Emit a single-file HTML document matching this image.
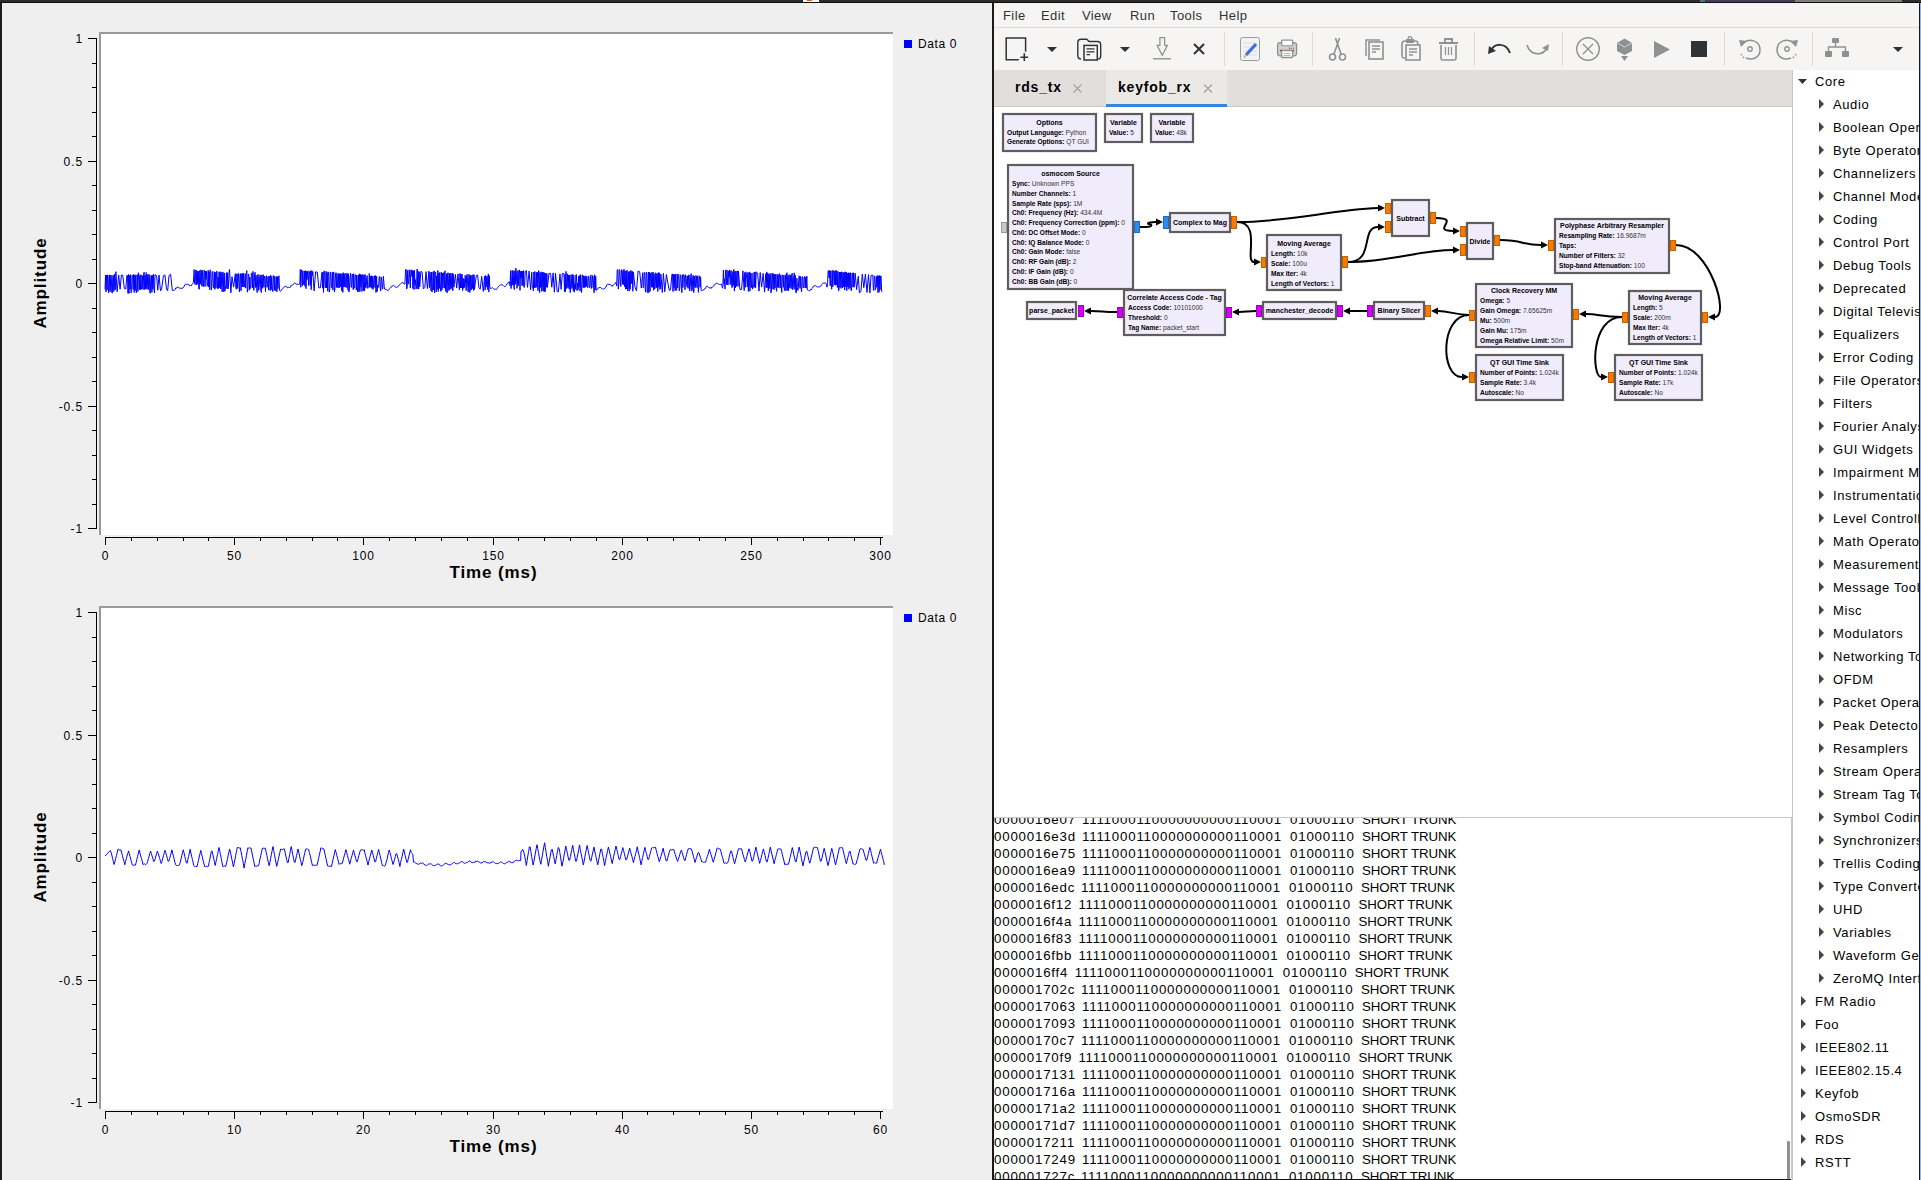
<!DOCTYPE html>
<html><head><meta charset="utf-8"><title>GRC</title><style>
html,body{margin:0;padding:0;width:1921px;height:1180px;overflow:hidden;background:#efefef;font-family:"Liberation Sans",sans-serif;position:relative}
.abs{position:absolute}
svg text{font-family:"Liberation Sans",sans-serif}
.tk{font-size:12px;letter-spacing:0.9px;fill:#000}
.ttl{font-size:17px;font-weight:bold;letter-spacing:0.9px;fill:#000}
.lg{font-size:12px;letter-spacing:0.6px;fill:#000}
.bt{font-size:7px;font-weight:bold;fill:#000}
.bk{font-size:6.6px;font-weight:bold;fill:#000}
.bv{font-weight:normal;fill:#333}
.tr{font-size:13px;letter-spacing:0.6px;fill:#000}
.menu span{position:absolute;top:8px;font-size:13px;letter-spacing:0.4px;color:#2e3436}
.cl{position:absolute;white-space:pre;font-size:13.3px;letter-spacing:0.8px;color:#000;line-height:15px}
.cu{letter-spacing:-0.1px}
.tab{position:absolute;top:79px;font-size:14px;font-weight:bold;letter-spacing:0.8px;color:#000}
</style></head><body>
<div class="abs" style="left:0;top:0;width:1921px;height:2px;background:#2d2d2d"></div>
<div class="abs" style="left:0;top:2px;width:1921px;height:1px;background:#0e0e0e"></div>
<div class="abs" style="left:1700px;top:0;width:5px;height:2px;background:#4c7a7c"></div>
<div class="abs" style="left:803px;top:0;width:16px;height:2px;background:#fff"></div>
<div class="abs" style="left:807px;top:0;width:5px;height:1px;background:#f05010"></div>
<div class="abs" style="left:1705px;top:0;width:90px;height:2px;background:#4a3a56"></div>
<div class="abs" style="left:1795px;top:0;width:107px;height:2px;background:#7a827a"></div>
<svg class="abs" style="left:0;top:0" width="992" height="1180"><rect x="0" y="3" width="992" height="1177" fill="#efefef"/><rect x="0" y="3" width="2" height="1177" fill="#1c1c1c"/><rect x="99" y="32" width="794" height="503" fill="#9a9a9a"/><rect x="101" y="34" width="792" height="501" fill="#ffffff"/><path d="M96.5 38.5V528.5" stroke="#000" stroke-width="1"/><path d="M88 38.5H97" stroke="#000" stroke-width="1"/><text x="83" y="43.0" text-anchor="end" class="tk">1</text><path d="M92 63.5H97" stroke="#000" stroke-width="1"/><path d="M92 87.5H97" stroke="#000" stroke-width="1"/><path d="M92 112.5H97" stroke="#000" stroke-width="1"/><path d="M92 136.5H97" stroke="#000" stroke-width="1"/><path d="M88 161.5H97" stroke="#000" stroke-width="1"/><text x="83" y="166.0" text-anchor="end" class="tk">0.5</text><path d="M92 185.5H97" stroke="#000" stroke-width="1"/><path d="M92 210.5H97" stroke="#000" stroke-width="1"/><path d="M92 234.5H97" stroke="#000" stroke-width="1"/><path d="M92 259.5H97" stroke="#000" stroke-width="1"/><path d="M88 283.5H97" stroke="#000" stroke-width="1"/><text x="83" y="288.0" text-anchor="end" class="tk">0</text><path d="M92 308.5H97" stroke="#000" stroke-width="1"/><path d="M92 332.5H97" stroke="#000" stroke-width="1"/><path d="M92 357.5H97" stroke="#000" stroke-width="1"/><path d="M92 381.5H97" stroke="#000" stroke-width="1"/><path d="M88 406.5H97" stroke="#000" stroke-width="1"/><text x="83" y="411.0" text-anchor="end" class="tk">-0.5</text><path d="M92 430.5H97" stroke="#000" stroke-width="1"/><path d="M92 455.5H97" stroke="#000" stroke-width="1"/><path d="M92 479.5H97" stroke="#000" stroke-width="1"/><path d="M92 504.5H97" stroke="#000" stroke-width="1"/><path d="M88 528.5H97" stroke="#000" stroke-width="1"/><text x="83" y="533.0" text-anchor="end" class="tk">-1</text><path d="M105 537.5H883" stroke="#000" stroke-width="1"/><path d="M105.5 537.0V545.0" stroke="#000" stroke-width="1"/><text x="105.5" y="560" text-anchor="middle" class="tk">0</text><path d="M131.5 537.0V541.0" stroke="#000" stroke-width="1"/><path d="M157.5 537.0V541.0" stroke="#000" stroke-width="1"/><path d="M183.5 537.0V541.0" stroke="#000" stroke-width="1"/><path d="M208.5 537.0V541.0" stroke="#000" stroke-width="1"/><path d="M234.5 537.0V545.0" stroke="#000" stroke-width="1"/><text x="234.5" y="560" text-anchor="middle" class="tk">50</text><path d="M260.5 537.0V541.0" stroke="#000" stroke-width="1"/><path d="M286.5 537.0V541.0" stroke="#000" stroke-width="1"/><path d="M312.5 537.0V541.0" stroke="#000" stroke-width="1"/><path d="M337.5 537.0V541.0" stroke="#000" stroke-width="1"/><path d="M363.5 537.0V545.0" stroke="#000" stroke-width="1"/><text x="363.5" y="560" text-anchor="middle" class="tk">100</text><path d="M389.5 537.0V541.0" stroke="#000" stroke-width="1"/><path d="M415.5 537.0V541.0" stroke="#000" stroke-width="1"/><path d="M441.5 537.0V541.0" stroke="#000" stroke-width="1"/><path d="M467.5 537.0V541.0" stroke="#000" stroke-width="1"/><path d="M493.5 537.0V545.0" stroke="#000" stroke-width="1"/><text x="493.5" y="560" text-anchor="middle" class="tk">150</text><path d="M518.5 537.0V541.0" stroke="#000" stroke-width="1"/><path d="M544.5 537.0V541.0" stroke="#000" stroke-width="1"/><path d="M570.5 537.0V541.0" stroke="#000" stroke-width="1"/><path d="M596.5 537.0V541.0" stroke="#000" stroke-width="1"/><path d="M622.5 537.0V545.0" stroke="#000" stroke-width="1"/><text x="622.5" y="560" text-anchor="middle" class="tk">200</text><path d="M647.5 537.0V541.0" stroke="#000" stroke-width="1"/><path d="M673.5 537.0V541.0" stroke="#000" stroke-width="1"/><path d="M699.5 537.0V541.0" stroke="#000" stroke-width="1"/><path d="M725.5 537.0V541.0" stroke="#000" stroke-width="1"/><path d="M751.5 537.0V545.0" stroke="#000" stroke-width="1"/><text x="751.5" y="560" text-anchor="middle" class="tk">250</text><path d="M777.5 537.0V541.0" stroke="#000" stroke-width="1"/><path d="M803.5 537.0V541.0" stroke="#000" stroke-width="1"/><path d="M828.5 537.0V541.0" stroke="#000" stroke-width="1"/><path d="M854.5 537.0V541.0" stroke="#000" stroke-width="1"/><path d="M880.5 537.0V545.0" stroke="#000" stroke-width="1"/><text x="880.5" y="560" text-anchor="middle" class="tk">300</text><text x="493.5" y="578" text-anchor="middle" class="ttl">Time (ms)</text><text transform="translate(45.5 283) rotate(-90)" text-anchor="middle" class="ttl">Amplitude</text><rect x="904" y="40" width="8" height="8" fill="#0000ff"/><text x="918" y="48" class="lg">Data 0</text><clipPath id="cp32"><rect x="101" y="34" width="792" height="501"/></clipPath><polyline clip-path="url(#cp32)" points="105,289.3 105.5,275.1 106,291.9 106.6,275 107.1,290.2 107.6,274.9 108.1,275.3 108.6,292.8 109.2,289.3 109.7,274.8 110.2,291.8 110.7,275.6 111.2,275 111.8,292.1 112.3,293.2 112.8,275.7 113.3,275.2 113.8,291.6 114.4,274.2 114.9,290 115.4,289.6 115.9,271.7 117.1,291.8 118.7,275 120.1,289.3 121.4,275 122.7,275.2 124.4,288.6 125.8,289 126.9,275.3 127.5,275.5 128,293.4 128.5,274.4 129,293.4 129.5,275.5 130.1,289.3 130.6,274.6 131.1,292.9 131.6,291.6 132.1,275.6 132.7,275.2 133.2,289.4 133.7,274.4 134.2,292.5 134.7,275 135.3,290.4 135.8,274.9 136.3,292.8 136.8,289.6 137.3,274.6 137.9,291.5 138.4,272.7 138.9,274.7 139.4,289.5 139.9,275.4 140.5,289.9 141,274.7 141.5,289.1 142,289 142.5,275.7 143.1,289.6 143.6,274.7 144.1,272.2 144.6,289.4 145.1,275 145.7,289.3 146.2,272.5 146.7,288.6 147.2,289.2 147.7,274.6 148.3,289.7 148.8,274.3 149.3,274.6 149.8,292.7 150.3,293.3 150.9,275.4 151.4,275.5 151.9,292.3 152.4,275.3 152.9,289.1 153.5,274.3 154,289.2 154.5,293 155,274.6 156.6,275.7 157.8,290.2 159,275 160.5,291 161.7,288.8 163.4,275.8 164.9,275 166.5,289 167.7,290.8 169,275.5 170.6,274.2 172.3,290.4 173.6,290.3 174.4,290.4 175.1,289.4 175.9,287.8 176.6,288.2 177.4,287 178.2,286.9 178.9,287.8 179.7,288.3 180.4,288.3 181.2,287.9 182,288.8 182.7,287.7 183.5,287.5 184.2,286.1 185,284.7 185.8,283.8 186.5,284.7 187.3,284.1 188,284.7 188.8,284.5 189.6,285.9 190.3,285.5 191.1,285.9 191.8,284.8 192.6,283.4 193.4,282.7 194.1,269.6 194.6,283.3 195.2,284.7 195.7,270 196.2,270 196.7,284.9 197.2,271 197.8,284 198.3,271.1 198.8,288.9 199.3,289.2 199.8,270.5 200.4,284.2 200.9,269.8 201.4,271 201.9,286.2 202.4,270.4 203,286.7 203.5,286.4 204,270 204.5,270.5 205,286.5 205.6,271.1 206.1,279.3 206.6,271.3 207.1,286.3 207.6,285.8 208.2,270.3 208.7,287 209.2,271.6 209.7,289.6 210.2,269.7 210.8,271.7 211.3,290.1 211.8,286.3 212.3,272.1 212.8,271.4 213.4,287.8 213.9,288 214.4,271.8 214.9,289.4 215.4,272.4 216,287.8 216.5,271.3 217,271.2 217.5,288.6 218,277.1 218.6,288.6 219.1,271.9 219.6,287.6 220.1,271.7 220.6,288.8 221.2,272.3 221.7,287.8 222.2,291.7 222.7,271.9 223.2,272.8 223.8,291.9 224.3,272.9 224.8,291.1 225.3,289.2 225.8,285.3 226.4,272.6 226.9,288.6 227.4,272.7 227.9,289 228.4,287.7 229,272.6 229.5,269.5 230.9,292.8 232,276.7 233.6,287.1 235.3,273.7 235.8,287.7 236.4,289.2 236.9,273.8 237.4,288.3 237.9,274.1 238.4,273.4 239,287.3 239.5,292 240,273.9 240.5,273.6 241,290.7 241.6,273.8 242.1,287 242.6,273.3 243.1,287 243.6,273.1 244.2,287.1 244.7,283.6 245.2,273.8 245.7,288.1 246.2,274 246.8,270.6 247.3,292.2 247.8,289.7 248.3,274.1 248.8,274.2 249.4,290.2 249.9,277.2 250.4,288.6 250.9,287.1 251.4,272.9 252,273.7 252.5,287.9 253,271.4 253.5,289.5 254,290.4 254.6,275 255.1,272.3 255.6,287.5 256.1,275.3 256.6,287 257.2,292.6 257.7,275 258.2,274.3 258.7,290.4 259.2,287.4 259.8,275.1 260.3,275.1 260.8,290.2 261.3,292.6 261.8,274.8 262.4,288.3 262.9,275.6 263.4,274.7 263.9,287.3 264.4,276 265,279.3 265.5,291.8 266,276.1 266.5,275.8 267,287.3 267.6,284.5 268.1,276.3 268.6,290.1 269.1,276.1 269.6,276.5 270.2,290.6 270.7,275.2 271.2,289.7 271.7,276.4 272.2,288.5 272.8,291.5 273.3,275.5 273.8,275.7 274.3,290.2 274.8,276.4 275.4,290.8 275.9,287.2 276.4,276.5 276.9,291.8 277.4,276.6 278,288.5 278.5,277.1 279,275.8 279.5,290.4 280.3,291.1 281,290.9 281.8,289.4 282.6,288.7 283.3,288.2 284.1,287.1 284.8,286.3 285.6,286.4 286.4,286.5 287.1,287.7 287.9,287.7 288.6,287.3 289.4,287.6 290.2,287.5 290.9,285.9 291.7,285 292.4,285 293.2,284.5 294,283.8 294.7,282.7 295.5,283.5 296.2,284.4 297,283.9 297.8,284.3 298.5,284.5 299.3,283.9 299.8,284.4 300.3,269.4 300.8,287.3 301.4,269.9 301.9,271 302.4,285.7 302.9,270.7 303.4,284 304,284.8 304.5,271.1 305,286.3 305.5,270.6 306,288.7 306.6,271.3 307.1,279.5 307.6,271.4 308.1,270.8 308.6,285.5 309.2,273.5 309.7,271.4 310.2,285.4 310.7,270.8 311.2,289.7 311.8,270.6 312.3,275.6 312.8,271.6 314.1,291 315.6,271.8 317.3,272.2 318.8,287.9 320.4,287.7 322,272.2 322.5,288.2 323,272.2 323.5,292.4 324,270.8 324.6,271.5 325.1,287.9 325.6,287.3 326.1,271.3 326.6,287.9 327.2,272.5 327.7,291.2 328.2,271.8 328.7,272.4 329.2,292.1 329.8,289.6 330.3,272.3 330.8,272 331.3,287.2 331.8,287.8 332.4,272.4 332.9,290.1 333.4,273 333.9,271.9 334.4,292.1 335,288.6 335.5,273.2 336,272.7 336.5,287.4 337,273.4 337.6,287.1 338.1,287.8 338.6,273.4 339.1,288 339.6,273.7 340.2,287 340.7,273.8 341.2,273.6 341.7,290.7 342.2,273.6 342.8,292.4 343.3,272.7 343.8,287.1 344.3,273.6 344.8,287 345.4,287.1 345.9,273.1 346.4,274.1 346.9,287.8 347.4,273.6 348,290.2 348.5,273.8 349,292 349.5,287 350,277.3 350.6,273.2 351.1,287.1 351.6,287.4 352.1,274.7 352.6,274 353.2,289.6 353.7,273.7 354.2,288.3 354.7,287.8 355.2,274.9 355.8,274.8 356.3,290.1 356.8,275 357.3,287.4 357.8,292 358.4,275 358.9,291.5 359.4,273.8 359.9,291.6 360.4,274.4 361,287.3 361.5,274.8 362,291.5 362.5,274.8 363,274.7 363.6,290.7 364.1,274.8 364.6,290.8 365.1,274.5 365.6,287.6 366.2,287.7 366.7,277.6 367.2,275.6 367.7,288.4 368.2,287.1 368.8,286.9 369.3,273.5 369.8,287.3 370.3,276.1 370.8,287.3 371.4,275.7 371.9,288.4 372.4,276.2 372.9,289.4 373.4,288 374,275.8 374.5,276 375,287.6 375.5,275.6 376,292.5 376.6,276.3 377.1,291.6 377.6,285 378.1,287.4 378.6,287.1 379.2,276.5 379.7,276.5 380.2,287.9 380.7,291 381.2,277.1 381.8,280.2 382.3,289.2 382.8,288.6 383.3,276.3 383.8,281.3 384.4,289 385.1,288.6 385.9,289.9 386.6,289.6 387.4,290.4 388.2,290.7 388.9,289.8 389.7,288.4 390.4,287.9 391.2,286.7 392,286.8 392.7,285.6 393.5,285.4 394.2,285.9 395,286.7 395.8,287.3 396.5,287.3 397.3,287 398,286.7 398.8,285.3 399.6,284.9 400.3,284.2 401.1,283.4 401.8,282.6 402.6,282.2 403.4,283.6 404.1,283.9 404.9,284 405.6,269.5 406.2,269.4 406.7,289 407.2,287.1 407.7,270.3 408.2,284.2 408.8,281.2 409.3,269.7 409.8,278.3 410.3,287.9 410.8,270.4 411.4,269.8 411.9,276.6 412.4,270.4 412.9,288.6 413.4,270.7 414,289.5 414.5,270.2 415,285.3 415.5,279.7 416,289.1 416.6,285.5 417.1,269 417.6,288.8 418.1,271.2 418.6,289.1 419.2,271.8 419.7,286.9 420.9,271.3 422.1,272.1 423.4,289 424.8,287.5 426,271.6 427.4,288.6 428.9,271.1 429.4,287.7 430,272.1 430.5,278 431,290.7 431.5,272.1 432,292 432.6,287.8 433.1,271.8 433.6,289.9 434.1,270.9 434.6,293 435.2,271.9 435.7,272.5 436.2,291.9 436.7,275.8 437.2,289.4 437.8,270.5 438.3,291.6 438.8,273.1 439.3,288.4 439.8,272.4 440.4,289 440.9,291.4 441.4,272.3 441.9,290.1 442.4,273 443,287.8 443.5,273.6 444,272.3 444.5,288.2 445,270.8 445.6,290.9 446.1,291.6 446.6,273.8 447.1,292.9 447.6,273 448.2,272.8 448.7,290.5 449.2,290.2 449.7,273.4 450.2,289.4 450.8,273.1 451.3,277.6 451.8,288.6 452.3,273.1 452.8,290.8 453.4,273.9 453.9,287.1 455.4,274.4 456.7,288 458,273.9 459.4,290 460,273.4 460.5,287.9 461,274.7 461.5,287.8 462,274 462.6,290.6 463.1,278.3 463.6,288.3 464.1,279.3 464.6,287.5 465.2,275.4 465.7,283.9 466.2,290.7 466.7,274.8 467.2,274.5 467.8,287.9 468.3,292 468.8,274.2 469.3,275.2 469.8,292.5 470.4,275.2 470.9,290.1 471.4,289.9 471.9,275.2 472.4,288.5 473,274.7 473.5,290.4 474,274.7 474.5,289.5 476.2,275.8 477.6,275 478.9,287.6 480.2,289.2 481.7,276.4 483.3,291.4 484.6,276.3 485.1,290.1 485.7,275.5 486.2,287.1 486.7,276.6 487.2,276.3 487.7,289.6 488.3,273.9 488.8,292.1 489.3,275.7 489.8,287.3 490.3,288.4 491.1,288.3 491.9,288 492.6,287.6 493.4,288.4 494.1,289.2 494.9,289.1 495.7,289.2 496.4,289.6 497.2,288.6 497.9,287.2 498.7,286.1 499.5,285.4 500.2,284.9 501,284.9 501.7,284.8 502.5,285 503.3,285.5 504,286.4 504.8,286.8 505.5,286 506.3,285.4 507.1,283.6 507.8,283.7 508.6,282.1 509.3,281.8 510.1,286 510.6,270.6 511.1,288.6 511.7,280.3 512.2,270.3 512.7,285.2 513.2,270.8 513.7,285.5 514.3,289.5 514.8,270.7 515.3,284.3 515.8,268.2 516.3,270.6 516.9,288.4 517.4,284.6 517.9,270.6 518.4,285.7 518.9,271.2 519.5,269.9 520,290.3 520.5,271.3 521,278.1 521.5,271.1 522.1,285.6 522.6,271.2 523.1,285.9 523.6,270.5 524.1,287.6 524.7,285.7 525.2,271.6 526.4,270.5 527.5,287.4 529.1,271 530.6,289.8 531.8,272.3 532.3,287.2 532.8,286.9 533.4,290.9 533.9,272 534.4,287.8 534.9,271.5 535.4,287.4 536,287.1 536.5,272.4 537,287.4 537.5,272.4 538,290.7 538.6,270.6 539.1,272.4 539.6,292.6 540.1,272.6 540.6,287.4 541.2,271.8 541.7,291.3 542.2,287.4 542.7,272.1 543.2,291.1 543.8,272.4 544.3,291.9 544.8,272.9 545.3,291.4 545.8,273.1 546.4,287.2 546.9,273.6 547.4,287.4 549,273.2 550.6,273.6 551.8,287.2 553.1,272.9 554.4,292.2 555.5,273.3 557.2,291.6 558.4,291.8 560,273.8 561.1,289.4 562.4,273.3 564,273.8 564.5,291.8 565,274.2 565.5,291.7 566,271.4 566.6,288.6 567.1,287.2 567.6,273.8 568.1,287.6 568.6,275.1 569.2,289.1 569.7,275 570.2,292.6 570.7,283.8 571.2,274.6 571.8,288.6 572.3,287.2 572.8,274.4 573.3,291.2 573.8,275.3 574.4,292.2 574.9,283.9 575.4,289.2 575.9,274.7 576.4,274.6 577,290.6 577.5,283 578,290.1 578.5,276 579,287.5 579.6,275.5 580.1,291.2 580.6,274.7 581.1,287.2 581.6,292.5 582.2,275 582.7,275 583.2,287.6 583.7,275.8 584.2,287.9 584.8,276.4 585.3,287.2 585.8,275.7 586.3,286.5 586.8,276.6 587.4,287.5 587.9,287.6 588.4,276.1 588.9,276.2 589.4,287.7 590,287.5 590.5,276.5 591,275 591.5,288.5 592,287.9 592.6,275.5 593.1,277 593.6,287.3 594.1,292.8 594.6,274.7 595.2,290 595.7,276.2 596.2,290.3 597,289.8 597.7,288.5 598.5,287.9 599.2,288.1 600,287 600.8,287.8 601.5,288.4 602.3,288.7 603,289.4 603.8,288.5 604.6,288.7 605.3,287.5 606.1,286.9 606.8,284.8 607.6,284.2 608.4,284 609.1,284.9 609.9,284 610.6,284.8 611.4,285.8 612.2,286.4 612.9,285 613.7,284.8 614.4,284.2 615.2,283.2 616,282.4 616.7,286.1 617.2,270.3 617.8,269.4 618.3,289.1 618.8,283.8 619.3,269.7 619.8,270.1 620.4,284.6 620.9,286.5 621.4,269.8 621.9,269.8 622.4,284.3 623,270.6 623.5,284.6 624,269.2 624.5,286.6 625,271 625.6,289.2 626.1,270.7 626.6,289 627.1,270.3 627.6,290.9 628.2,287.9 628.7,271.7 629.2,291.1 629.7,271.3 630.2,289.2 630.8,270.4 631.3,271.1 631.8,283.7 632.3,271.2 632.8,291.3 633.4,272.1 634.9,286.7 636.5,290.9 638.1,271.1 639.7,271.7 641.3,288 642.7,272.7 643.2,287.9 643.7,287.4 644.2,272.4 644.8,272.8 645.3,291 645.8,292.2 646.3,272.2 646.8,273.1 647.4,292 647.9,292.8 648.4,272 648.9,292.6 649.4,272.3 650,291.4 650.5,273.2 651,273.1 651.5,287.2 652,272.1 652.6,287.3 653.1,272.2 653.6,290.3 654.1,273.6 654.6,289.1 655.2,287.8 655.7,272.7 656.2,273.2 656.7,287.8 657.2,273.8 657.8,291.5 658.3,272.5 658.8,287.2 659.3,272.8 659.8,289.4 660.4,289 660.9,274.1 662.3,292.5 663.4,273.4 664.8,291.8 666.4,274.6 667.7,282.2 669.3,290.4 670.5,289.9 672,274 672.5,274.1 673,291.5 673.6,274.3 674.1,287.9 674.6,274.5 675.1,290.7 675.6,274.1 676.2,290.2 676.7,290.4 677.2,273.9 677.7,288 678.2,275.3 678.8,274.4 679.3,290.9 679.8,287.8 680.3,275.6 680.8,274.7 681.4,287.2 681.9,292.6 682.4,274.9 682.9,287.6 683.4,274.5 684,275 684.5,278.5 685,289.8 685.5,274.9 686,275.2 686.6,284.4 687.1,287.2 687.6,275.9 688.1,288.5 688.6,275 689.2,275.2 689.7,290.9 690.2,287.2 690.7,276.5 691.2,273.6 691.8,291.1 692.3,289 692.8,275.6 693.3,275.4 693.8,292.5 694.4,276 694.9,287.4 695.4,287.5 695.9,275.4 696.4,276 697,287.6 697.5,276.3 698,287.3 698.5,292.4 699,275.6 699.6,276.6 700.1,287.3 700.6,276.8 701.1,290.4 701.9,290.8 702.6,290.4 703.4,290.2 704.2,288.9 704.9,289.1 705.7,288.1 706.4,286.3 707.2,286.1 708,286.7 708.7,287.7 709.5,287.9 710.2,287.4 711,288.5 711.8,287.1 712.5,287.1 713.3,286.5 714,285.1 714.8,284.5 715.6,284.1 716.3,283.1 717.1,283.2 717.8,283.9 718.6,284.1 719.4,284.5 720.1,284.4 720.9,284.4 721.6,284.2 722.4,288.2 722.9,286.3 723.4,270 724,284.2 724.5,278.8 725,289 725.5,270.3 726,269.8 726.6,284.7 727.1,270.2 727.6,284.3 728.1,285.1 728.6,270.9 729.2,277.3 729.7,269.9 730.2,284.6 730.7,271.3 731.2,270.5 731.8,287.6 732.3,287.3 732.8,271.5 733.3,285.4 733.8,269.4 734.4,291.1 734.9,271.5 735.4,287.8 735.9,271 736.4,286.3 737,271.1 737.5,271 738,286.5 738.5,271.2 739.9,289.4 741.6,289.5 742.9,270.8 744.2,290.5 744.7,272.5 745.2,287.4 745.8,271.8 746.3,273.9 746.8,279.4 747.3,287 747.8,272.5 748.4,291.4 748.9,272.6 749.4,271.9 749.9,291.2 750.4,272.8 751,287.2 751.5,287.7 752,273 752.5,289.1 753,287.5 753.6,287.3 754.1,272.2 754.6,287.2 755.1,271.9 755.6,287.8 756.2,271.9 757.6,273 759,291.1 760.2,272.5 761.6,287.1 763.1,273.4 764.6,292.1 765.2,282.4 765.7,273.8 766.2,287.7 766.7,271.9 767.2,287.7 767.8,272.9 768.3,290.8 768.8,274.3 769.3,288.5 769.8,273.7 770.4,273.6 770.9,292.8 771.4,291.5 771.9,273.1 772.4,273.6 773,289 773.5,273.7 774,289.8 774.5,274.5 775,287.9 775.6,274 776.1,287.9 776.6,291.4 777.1,274.2 777.6,287.4 778.2,274.7 778.7,287.6 779.2,273.7 779.7,273.7 780.2,288.2 780.8,275.1 781.3,286.1 781.8,292.5 782.3,274.8 782.8,275.1 783.4,287.3 783.9,275.4 784.4,290.5 784.9,290.3 785.4,274.7 786,290.8 786.5,275.2 787,272.7 787.5,290.4 788,275.6 788.6,290.7 789.1,274.6 789.6,287.7 790.1,287.7 790.6,274.9 791.2,288.7 791.7,274.7 792.2,273.2 792.7,289.8 793.2,288.4 793.8,275.5 794.3,272.8 794.8,289.3 795.3,275.2 795.8,292.6 796.4,292.8 796.9,278.2 797.4,287.5 797.9,290.4 798.4,287.5 799,275.8 799.5,276.4 800,288.3 800.5,276.5 801,287.3 801.6,291.8 802.1,276.7 802.6,276.8 803.1,287.5 803.6,288 804.2,276.9 804.7,276.7 805.2,288 805.7,276.9 806.2,288.1 806.8,276.1 807.3,289.9 808,289.7 808.8,290.6 809.6,290.9 810.3,289.7 811.1,290 811.8,288.7 812.6,287.8 813.4,286.2 814.1,285.8 814.9,285.7 815.6,285.7 816.4,286.2 817.2,287 817.9,287.2 818.7,286.9 819.4,286.9 820.2,286.5 821,285.9 821.7,284.8 822.5,283.8 823.2,283.1 824,282.8 824.8,283.2 825.5,282.9 826.3,284.2 827,287.2 827.6,283.2 828.1,270.9 828.6,270.7 829.1,278 829.6,270.5 830.2,285.9 830.7,270.8 831.2,284.4 831.7,289.2 832.2,270.5 832.8,286.9 833.3,270.4 833.8,271 834.3,284.7 834.8,271.1 835.4,285.3 835.9,270.3 836.4,284.8 836.9,270.7 837.4,287.5 838,271.6 838.5,290.7 839,290.5 839.5,272 840,287.4 840.6,272.1 841.1,288.4 841.6,271.9 842.1,272.3 842.6,287.8 843.2,272.2 843.7,287 844.2,272.6 844.7,290.1 845.2,271.8 845.8,286.6 846.3,272 846.8,290.6 847.3,273.1 847.8,286.9 848.4,272.7 848.9,289.2 849.4,273.2 849.9,287.8 850.4,272.6 851,290.6 851.5,290.5 852,273.6 852.5,272.9 853,287.2 853.6,272.8 854.1,287.2 855.2,273.2 856.6,289.6 858.3,276.3 859.4,292.7 860.9,291.6 862.3,274.2 863.8,287.7 865.4,274.2 867,292.4 868.5,274.6 869.9,292.9 871.1,275.5 872.8,275.1 873.3,289.2 873.8,290.6 874.3,276.1 874.8,276.1 875.4,289.8 875.9,287.3 876.4,276.5 876.9,287.2 877.4,275.5 878,292.6 878.5,275.8 879,292.3 879.5,275.6 880,289.8 880.6,275.9 881.1,276.2 881.6,291.1 882.1,292.1" fill="none" stroke="#0000ff" stroke-width="1"/><rect x="99" y="606" width="794" height="503" fill="#9a9a9a"/><rect x="101" y="608" width="792" height="501" fill="#ffffff"/><path d="M96.5 612.5V1102.5" stroke="#000" stroke-width="1"/><path d="M88 612.5H97" stroke="#000" stroke-width="1"/><text x="83" y="617.0" text-anchor="end" class="tk">1</text><path d="M92 637.5H97" stroke="#000" stroke-width="1"/><path d="M92 661.5H97" stroke="#000" stroke-width="1"/><path d="M92 686.5H97" stroke="#000" stroke-width="1"/><path d="M92 710.5H97" stroke="#000" stroke-width="1"/><path d="M88 735.5H97" stroke="#000" stroke-width="1"/><text x="83" y="740.0" text-anchor="end" class="tk">0.5</text><path d="M92 759.5H97" stroke="#000" stroke-width="1"/><path d="M92 784.5H97" stroke="#000" stroke-width="1"/><path d="M92 808.5H97" stroke="#000" stroke-width="1"/><path d="M92 833.5H97" stroke="#000" stroke-width="1"/><path d="M88 857.5H97" stroke="#000" stroke-width="1"/><text x="83" y="862.0" text-anchor="end" class="tk">0</text><path d="M92 882.5H97" stroke="#000" stroke-width="1"/><path d="M92 906.5H97" stroke="#000" stroke-width="1"/><path d="M92 931.5H97" stroke="#000" stroke-width="1"/><path d="M92 955.5H97" stroke="#000" stroke-width="1"/><path d="M88 980.5H97" stroke="#000" stroke-width="1"/><text x="83" y="985.0" text-anchor="end" class="tk">-0.5</text><path d="M92 1004.5H97" stroke="#000" stroke-width="1"/><path d="M92 1029.5H97" stroke="#000" stroke-width="1"/><path d="M92 1053.5H97" stroke="#000" stroke-width="1"/><path d="M92 1078.5H97" stroke="#000" stroke-width="1"/><path d="M88 1102.5H97" stroke="#000" stroke-width="1"/><text x="83" y="1107.0" text-anchor="end" class="tk">-1</text><path d="M105 1111.5H883" stroke="#000" stroke-width="1"/><path d="M105.5 1111.0V1119.0" stroke="#000" stroke-width="1"/><text x="105.5" y="1134" text-anchor="middle" class="tk">0</text><path d="M131.5 1111.0V1115.0" stroke="#000" stroke-width="1"/><path d="M157.5 1111.0V1115.0" stroke="#000" stroke-width="1"/><path d="M183.5 1111.0V1115.0" stroke="#000" stroke-width="1"/><path d="M208.5 1111.0V1115.0" stroke="#000" stroke-width="1"/><path d="M234.5 1111.0V1119.0" stroke="#000" stroke-width="1"/><text x="234.5" y="1134" text-anchor="middle" class="tk">10</text><path d="M260.5 1111.0V1115.0" stroke="#000" stroke-width="1"/><path d="M286.5 1111.0V1115.0" stroke="#000" stroke-width="1"/><path d="M312.5 1111.0V1115.0" stroke="#000" stroke-width="1"/><path d="M337.5 1111.0V1115.0" stroke="#000" stroke-width="1"/><path d="M363.5 1111.0V1119.0" stroke="#000" stroke-width="1"/><text x="363.5" y="1134" text-anchor="middle" class="tk">20</text><path d="M389.5 1111.0V1115.0" stroke="#000" stroke-width="1"/><path d="M415.5 1111.0V1115.0" stroke="#000" stroke-width="1"/><path d="M441.5 1111.0V1115.0" stroke="#000" stroke-width="1"/><path d="M467.5 1111.0V1115.0" stroke="#000" stroke-width="1"/><path d="M493.5 1111.0V1119.0" stroke="#000" stroke-width="1"/><text x="493.5" y="1134" text-anchor="middle" class="tk">30</text><path d="M518.5 1111.0V1115.0" stroke="#000" stroke-width="1"/><path d="M544.5 1111.0V1115.0" stroke="#000" stroke-width="1"/><path d="M570.5 1111.0V1115.0" stroke="#000" stroke-width="1"/><path d="M596.5 1111.0V1115.0" stroke="#000" stroke-width="1"/><path d="M622.5 1111.0V1119.0" stroke="#000" stroke-width="1"/><text x="622.5" y="1134" text-anchor="middle" class="tk">40</text><path d="M647.5 1111.0V1115.0" stroke="#000" stroke-width="1"/><path d="M673.5 1111.0V1115.0" stroke="#000" stroke-width="1"/><path d="M699.5 1111.0V1115.0" stroke="#000" stroke-width="1"/><path d="M725.5 1111.0V1115.0" stroke="#000" stroke-width="1"/><path d="M751.5 1111.0V1119.0" stroke="#000" stroke-width="1"/><text x="751.5" y="1134" text-anchor="middle" class="tk">50</text><path d="M777.5 1111.0V1115.0" stroke="#000" stroke-width="1"/><path d="M803.5 1111.0V1115.0" stroke="#000" stroke-width="1"/><path d="M828.5 1111.0V1115.0" stroke="#000" stroke-width="1"/><path d="M854.5 1111.0V1115.0" stroke="#000" stroke-width="1"/><path d="M880.5 1111.0V1119.0" stroke="#000" stroke-width="1"/><text x="880.5" y="1134" text-anchor="middle" class="tk">60</text><text x="493.5" y="1152" text-anchor="middle" class="ttl">Time (ms)</text><text transform="translate(45.5 857) rotate(-90)" text-anchor="middle" class="ttl">Amplitude</text><rect x="904" y="614" width="8" height="8" fill="#0000ff"/><text x="918" y="622" class="lg">Data 0</text><clipPath id="cp606"><rect x="101" y="608" width="792" height="501"/></clipPath><polyline clip-path="url(#cp606)" points="105,855.6 105.8,855.5 106.5,854.5 107.3,853.9 108,852.7 108.8,852.2 109.6,851.5 110.3,850.5 111.1,852.4 111.8,855.1 112.6,858.3 113.4,861.7 114.1,864.5 114.9,861.8 115.6,858.7 116.4,855.6 117.2,852.8 117.9,849.3 118.7,849.3 119.4,850.2 120.2,849.9 121,850 121.7,853 122.5,855.8 123.2,858.8 124,861.4 124.8,864.8 125.5,861.6 126.3,858.8 127,856.1 127.8,853.5 128.6,850.9 129.3,853.8 130.1,856.6 130.8,859.4 131.6,862.2 132.4,865 133.1,865.3 133.9,865.2 134.6,865 135.4,865.2 136.2,862.4 136.9,859.2 137.7,856.2 138.4,853 139.2,850 140,853.1 140.7,855.9 141.5,858.6 142.2,861.2 143,864.5 143.8,864.3 144.5,863.8 145.3,864.5 146,864.5 146.8,863.7 147.6,861.6 148.3,858.8 149.1,856.2 149.8,853.4 150.6,851.1 151.4,853.6 152.1,856.1 152.9,858.7 153.6,861.4 154.4,861.2 155.2,858.7 155.9,856 156.7,853.2 157.4,851.1 158.2,853.4 159,856 159.7,858.5 160.5,861.2 161.2,863.5 162,861.2 162.8,858.2 163.5,855.5 164.3,852.5 165,850.3 165.8,852.9 166.6,855.4 167.3,858.3 168.1,861.3 168.8,861.1 169.6,858.5 170.4,855.7 171.1,853.1 171.9,849.9 172.6,853 173.4,856.2 174.2,859.2 174.9,862.4 175.7,864.7 176.4,865.5 177.2,865.4 178,865.4 178.7,865.3 179.5,864.8 180.2,862.4 181,859 181.8,855.9 182.5,852.6 183.3,849.8 184,852.8 184.8,856.3 185.6,859.7 186.3,862.7 187.1,863.3 187.8,859.7 188.6,856.3 189.4,853 190.1,849.3 190.9,853 191.6,856.2 192.4,859.4 193.2,862.9 193.9,865.8 194.7,866.6 195.4,866.5 196.2,866.3 197,866.9 197.7,863.6 198.5,860.3 199.2,857 200,853.7 200.8,850.4 201.5,853.6 202.3,856.8 203,860.1 203.8,863.1 204.6,866.5 205.3,866.7 206.1,866.2 206.8,866 207.6,866.9 208.4,866.3 209.1,862.5 209.9,859 210.6,855.1 211.4,851.2 212.2,851.3 212.9,854.8 213.7,858.3 214.4,861.9 215.2,865.5 216,861.7 216.7,858.3 217.5,854.6 218.2,851.4 219,847.5 219.8,851.4 220.5,854.7 221.3,858.6 222,862.6 222.8,866.5 223.6,866.5 224.3,865.9 225.1,866.5 225.8,866.3 226.6,862.8 227.4,859.3 228.1,855.8 228.9,852.1 229.6,849 230.4,852.1 231.2,855.9 231.9,859.5 232.7,863 233.4,866.8 234.2,863.1 235,859.2 235.7,855.3 236.5,851.5 237.2,847.7 238,847.2 238.8,847.9 239.5,848.1 240.3,847.8 241,851.7 241.8,855.7 242.6,859.6 243.3,863.3 244.1,868.1 244.8,863.8 245.6,859.9 246.4,855.9 247.1,851.8 247.9,847.8 248.6,848.2 249.4,847.8 250.2,848.2 250.9,847.9 251.7,851.5 252.4,855.1 253.2,858.7 254,862.3 254.7,866.3 255.5,866.2 256.2,866.4 257,865.7 257.8,865.8 258.5,865.7 259.3,862.6 260,859 260.8,855.4 261.6,851.8 262.3,848.4 263.1,848.4 263.8,848.1 264.6,848.3 265.4,848.3 266.1,851.9 266.9,855.5 267.6,859.1 268.4,862.6 269.2,865.7 269.9,862.1 270.7,858.2 271.4,854.3 272.2,850.3 273,846.5 273.7,850.5 274.5,854.6 275.2,858.6 276,862.9 276.8,866.3 277.5,862.9 278.3,859.7 279,856.2 279.8,852.7 280.6,849.1 281.3,849.3 282.1,849.4 282.8,849.6 283.6,848.9 284.4,848.9 285.1,852.8 285.9,856.1 286.6,859.4 287.4,862.6 288.2,862.5 288.9,858.4 289.7,854.6 290.4,850.8 291.2,846.6 292,850.4 292.7,854.5 293.5,858.2 294.2,861.9 295,862.6 295.8,859.1 296.5,855.6 297.3,852.6 298,849 298.8,852.3 299.6,855.9 300.3,859.3 301.1,862.5 301.8,865.7 302.6,862.8 303.4,859.2 304.1,855.8 304.9,852.4 305.6,849.2 306.4,848.9 307.2,848.9 307.9,849.2 308.7,849.7 309.4,852.6 310.2,855.9 311,859.1 311.7,862.5 312.5,865.7 313.2,865.1 314,865.2 314.8,865.3 315.5,865.4 316.3,865.2 317,865.3 317.8,862 318.6,858.4 319.3,855 320.1,851.8 320.8,847.9 321.6,848 322.4,848.7 323.1,848.4 323.9,849 324.6,852.2 325.4,855.8 326.2,859.4 326.9,862.9 327.7,866 328.4,866.1 329.2,866.5 330,866 330.7,866.2 331.5,866.5 332.2,863.2 333,859.5 333.8,856.2 334.5,852.7 335.3,849.6 336,852.2 336.8,855.4 337.6,858.2 338.3,861.1 339.1,864.4 339.8,863.7 340.6,863.7 341.4,863.7 342.1,863.7 342.9,861 343.6,858.2 344.4,855.3 345.2,852.6 345.9,849.7 346.7,852.6 347.4,855.3 348.2,858.3 349,861 349.7,864.2 350.5,861 351.2,858.3 352,855.5 352.8,852.6 353.5,850.1 354.3,853.1 355,855.9 355.8,858.8 356.6,861.6 357.3,861.7 358.1,858.7 358.8,855.7 359.6,853 360.4,850.2 361.1,850 361.9,849.7 362.6,849.8 363.4,850.4 364.2,849.7 364.9,852.9 365.7,855.9 366.4,858.8 367.2,861.6 368,865.1 368.7,861.8 369.5,858.8 370.2,855.9 371,853 371.8,850.1 372.5,852.9 373.3,855.7 374,858.7 374.8,861.8 375.6,861.8 376.3,858.5 377.1,855.5 377.8,852.6 378.6,849.5 379.4,852.6 380.1,855.7 380.9,859.1 381.6,862.4 382.4,865.5 383.2,865.4 383.9,866.2 384.7,865.9 385.4,865.5 386.2,862.2 387,859.4 387.7,856.1 388.5,852.6 389.2,850 390,852.5 390.8,855.7 391.5,858.8 392.3,861.7 393,864.5 393.8,862 394.6,859.4 395.3,856.5 396.1,853.7 396.8,853.8 397.6,856.9 398.4,859.8 399.1,862.6 399.9,866.5 400.6,862.4 401.4,859.3 402.2,856 402.9,852.7 403.7,849.2 404.4,852.1 405.2,855.6 406,858.8 406.7,862.2 407.5,862.3 408.2,859 409,855.9 409.8,852.4 410.5,849.7 411.3,852.6 412,853.3 412.8,854.5 413.5,862.1 414.3,862 415,862.5 415.8,863.1 416.5,863.4 417.3,863.5 418.1,864.6 418.8,863.8 419.6,863.8 420.3,863.2 421.1,863.3 421.9,863.3 422.6,862.8 423.4,863.4 424.1,864.6 424.9,865 425.7,864.8 426.4,865.5 427.2,865.4 427.9,864.6 428.7,863.9 429.5,864.1 430.2,863.7 431,863.8 431.7,864.4 432.5,865.2 433.3,865.3 434,865.8 434.8,865.7 435.5,865.3 436.3,864.6 437.1,864.6 437.8,863.7 438.6,864 439.3,865 440.1,865.5 440.9,866 441.6,866 442.4,865.6 443.1,865.4 443.9,864.6 444.7,863.6 445.4,863.4 446.2,863.2 446.9,864.2 447.7,864.1 448.5,864.6 449.2,865 450,864.5 450.7,864.7 451.5,864.2 452.3,863.6 453,863.2 453.8,862.4 454.5,862.4 455.3,863.4 456.1,863.8 456.8,863.7 457.6,863.7 458.3,863.3 459.1,863.4 459.9,862.4 460.6,862.2 461.4,861.5 462.1,861.5 462.9,862.1 463.7,862.8 464.4,863.3 465.2,863 465.9,863.2 466.7,862.5 467.5,862.3 468.2,861.7 469,861.2 469.7,861 470.5,861.3 471.3,862.4 472,862.8 472.8,862.7 473.5,862.4 474.3,862.2 475.1,862.5 475.8,861.1 476.6,861.5 477.3,861.1 478.1,861.4 478.9,861.9 479.6,862.3 480.4,862.9 481.1,862.6 481.9,863.2 482.7,862 483.4,861.5 484.2,861.7 484.9,861.5 485.7,861.8 486.5,862.2 487.2,863 488,862.6 488.7,862.9 489.5,863.1 490.3,863.3 491,862.1 491.8,862.1 492.5,862.1 493.3,861.5 494.1,862.3 494.8,863.2 495.6,863.6 496.3,863.6 497.1,863.7 497.9,863.2 498.6,863.4 499.4,862.7 500.1,862.2 500.9,861.7 501.7,862.4 502.4,862.6 503.2,863.4 503.9,863.3 504.7,863.9 505.5,863.5 506.2,862.7 507,862.2 507.7,862 508.5,861.4 509.3,861.9 510,861.3 510.8,862.6 511.5,862.7 512.3,862.6 513.1,862.8 513.8,861.6 514.6,861.1 515.3,860.8 516.1,860.5 516.9,859.9 517.6,860.7 518.4,860.8 519.1,860.5 519.9,860.7 520.7,860.5 521,851.3 521.8,851 522.5,849.3 523.3,850.5 524,853 524.8,856.8 525.6,860.8 526.3,865.5 527.1,860.7 527.8,856.1 528.6,851.5 529.4,846.8 530.1,846.9 530.9,851.7 531.6,856.3 532.4,861.1 533.2,865 533.9,861.4 534.7,857 535.4,853 536.2,848.7 537,844.7 537.7,848.6 538.5,852.7 539.2,856.7 540,860.9 540.8,864.3 541.5,860.5 542.3,855.9 543,851.6 543.8,846.9 544.6,842.8 545.3,847.5 546.1,852.1 546.8,856.8 547.6,861.3 548.4,866.3 549.1,862.1 549.9,858 550.6,853.9 551.4,849.8 552.2,849.2 552.9,853 553.7,856.6 554.4,860.2 555.2,863.9 556,859.7 556.7,855.5 557.5,851.5 558.2,847.5 559,848.1 559.8,852.4 560.5,857.1 561.3,862 562,866.2 562.8,862.3 563.6,858.1 564.3,854 565.1,850.1 565.8,846.1 566.6,849.8 567.4,853.3 568.1,857 568.9,860.3 569.6,860.3 570.4,856.6 571.2,852.8 571.9,849.2 572.7,845.3 573.4,849.3 574.2,853.3 575,857.4 575.7,861.2 576.5,861 577.2,857.1 578,853.2 578.8,849.2 579.5,844.9 580.3,849.5 581,853.3 581.8,857.2 582.6,861 583.3,864.9 584.1,861.5 584.8,857.2 585.6,853.1 586.4,849.2 587.1,845.5 587.9,849.2 588.6,852.9 589.4,856.7 590.2,860.5 590.9,861.2 591.7,857.5 592.4,854.1 593.2,850.8 594,847.1 594.7,851 595.5,854.4 596.2,857.7 597,861.5 597.8,864.8 598.5,860.8 599.3,856.9 600,853 600.8,849.1 601.6,849.2 602.3,853.3 603.1,857.3 603.8,860.9 604.6,865.6 605.4,861.5 606.1,857.7 606.9,854 607.6,850.6 608.4,847.1 609.2,850.1 609.9,853.5 610.7,856.8 611.4,860 612.2,863.6 613,859.8 613.7,856.3 614.5,852.8 615.2,849.4 616,846 616.8,849.4 617.5,852.5 618.3,855.8 619,859.2 619.8,859.6 620.6,856.5 621.3,853.7 622.1,850.7 622.8,847.6 623.6,850.6 624.4,853.8 625.1,856.7 625.9,859.9 626.6,859.6 627.4,856.8 628.2,853.9 628.9,851.1 629.7,848.1 630.4,851.2 631.2,853.9 632,856.8 632.7,859.7 633.5,862.6 634.2,859.3 635,856.3 635.8,853.2 636.5,850.4 637.3,846.8 638,851 638.8,854.2 639.6,857.5 640.3,861 641.1,864.9 641.8,861.2 642.6,857.6 643.4,854.1 644.1,850.9 644.9,847.4 645.6,850.7 646.4,853.4 647.2,856.4 647.9,859.4 648.7,859.4 649.4,856.4 650.2,853.6 651,850.3 651.7,848 652.5,847.4 653.2,848 654,847.4 654.8,847.5 655.5,847.2 656.3,850.6 657,853.3 657.8,856.3 658.6,859 659.3,861.8 660.1,859.2 660.8,856.6 661.6,854 662.4,851.2 663.1,848.2 663.9,852 664.6,854.7 665.4,857.6 666.2,860.9 666.9,861 667.7,858.2 668.4,855.3 669.2,852.7 670,849.9 670.7,849.4 671.5,849.9 672.2,849.4 673,849.9 673.8,849.6 674.5,852.2 675.3,854.6 676,857 676.8,859.4 677.6,861.4 678.3,859.3 679.1,856.9 679.8,854.4 680.6,851.8 681.4,850.1 682.1,852.5 682.9,855.1 683.6,857.6 684.4,860.3 685.2,860.4 685.9,857.2 686.7,854.3 687.4,851.3 688.2,849 689,848.3 689.7,848.7 690.5,848.8 691.2,848.8 692,850.9 692.8,854 693.5,856.7 694.3,859.5 695,862.4 695.8,859.8 696.6,857.3 697.3,855 698.1,852.7 698.8,852.6 699.6,855 700.4,857.4 701.1,859.6 701.9,862 702.6,861.7 703.4,862.4 704.2,862 704.9,862.5 705.7,862 706.4,859.4 707.2,856.9 708,854.4 708.7,851.9 709.5,849.2 710.2,852.1 711,854.5 711.8,857 712.5,859.9 713.3,862.2 714,859.6 714.8,856.9 715.6,854 716.3,851.5 717.1,848 717.8,848.1 718.6,848.8 719.4,848.7 720.1,848.9 720.9,851.3 721.6,854.2 722.4,857.2 723.2,859.8 723.9,863.1 724.7,863.4 725.4,862.8 726.2,863.3 727,863.3 727.7,862.8 728.5,860.4 729.2,857.1 730,853.9 730.8,851.1 731.5,851.2 732.3,854.3 733,857.5 733.8,860.8 734.6,863.7 735.3,861.1 736.1,858 736.8,855.1 737.6,852.2 738.4,848.8 739.1,848.9 739.9,848.6 740.6,849 741.4,848.6 742.2,851.3 742.9,854.2 743.7,856.9 744.4,859.4 745.2,861.9 746,859.6 746.7,856.7 747.5,854 748.2,851.4 749,848.8 749.8,851.3 750.5,854.7 751.3,858 752,861.4 752.8,860.7 753.6,857.6 754.3,854 755.1,850.8 755.8,847.1 756.6,850.3 757.4,853.7 758.1,856.9 758.9,859.9 759.6,863.4 760.4,860.7 761.2,857.6 761.9,854.7 762.7,851.5 763.4,848.9 764.2,852.2 765,855.3 765.7,858.7 766.5,861.7 767.2,861.8 768,858.3 768.8,854.6 769.5,851.1 770.3,847.2 771,850.4 771.8,854 772.6,857 773.3,860.1 774.1,863.7 774.8,860.5 775.6,857.6 776.4,854.6 777.1,851.9 777.9,848.9 778.6,848.8 779.4,848.9 780.2,848.9 780.9,849 781.7,851.7 782.4,854.9 783.2,858 784,861 784.7,864.8 785.5,864.1 786.2,864.7 787,864.1 787.8,864.2 788.5,864.2 789.3,861 790,857.6 790.8,854.4 791.6,850.7 792.3,847.6 793.1,850.9 793.8,854.7 794.6,858.1 795.4,861.5 796.1,862 796.9,857.9 797.6,854.3 798.4,850.8 799.2,847.1 799.9,850.7 800.7,854.4 801.4,858.3 802.2,862.3 803,865.9 803.7,862 804.5,858.8 805.2,855.1 806,851.8 806.8,851.1 807.5,854.2 808.3,857.4 809,860.6 809.8,863.2 810.6,860.3 811.3,857 812.1,853.9 812.8,850.7 813.6,847.6 814.4,847.2 815.1,847.3 815.9,847.8 816.6,847.5 817.4,847.5 818.2,850.7 818.9,854.2 819.7,857.7 820.4,861.3 821.2,861 822,857.9 822.7,854.6 823.5,851.1 824.2,848.3 825,851.7 825.8,855.1 826.5,858.9 827.3,862.8 828,865.6 828.8,862.2 829.6,858.9 830.3,855.3 831.1,851.5 831.8,848.4 832.6,851.6 833.4,855 834.1,858.5 834.9,862 835.6,864.8 836.4,861.4 837.2,858 837.9,854.5 838.7,851.2 839.4,847.8 840.2,847.8 841,847.9 841.7,847.3 842.5,847.7 843.2,850.7 844,854.2 844.8,857.4 845.5,860.7 846.3,863.6 847,861.1 847.8,857.6 848.6,854.5 849.3,851.5 850.1,851.3 850.8,854.6 851.6,857.8 852.4,861.1 853.1,864.1 853.9,863.8 854.6,864.5 855.4,864.2 856.2,863.7 856.9,860.9 857.7,858.1 858.4,855 859.2,852 860,849 860.7,848.7 861.5,848.7 862.2,849.3 863,849.3 863.8,852.1 864.5,854.8 865.3,857.6 866,860.3 866.8,860.1 867.6,856.7 868.3,853.6 869.1,850.6 869.8,847.4 870.6,850.3 871.4,853.7 872.1,856.8 872.9,860 873.6,863.2 874.4,862.6 875.2,863.4 875.9,862.8 876.7,863.1 877.4,860 878.2,857.3 879,854.6 879.7,851.9 880.5,849.3 881.2,852.2 882,855.2 882.8,858.3 883.5,860.7 884.3,864.9" fill="none" stroke="#0000ff" stroke-width="1"/></svg>
<div class="abs" style="left:992px;top:3px;width:2px;height:1177px;background:#1a1a1a"></div>
<div class="abs" style="left:994px;top:3px;width:925px;height:24px;background:#f6f5f4"></div>
<div class="abs" style="left:994px;top:27px;width:925px;height:1px;background:#e0ddda"></div>
<div class="abs" style="left:994px;top:28px;width:925px;height:42px;background:#f6f5f4"></div>
<div class="menu"><span style="left:1003px">File</span><span style="left:1041px">Edit</span><span style="left:1082px">View</span><span style="left:1130px">Run</span><span style="left:1170px">Tools</span><span style="left:1219px">Help</span></div>
<svg class="abs" style="left:0;top:0" width="1921" height="80"><path d="M1018.8 59.8H1006.2V38H1025.6V51.8" fill="none" stroke="#2e3436" stroke-width="1.5"/><path d="M1024.3 53.3V61M1020.4 57.2H1028.1" stroke="#2e3436" stroke-width="1.6"/><path d="M1047 47h10l-5 5z" fill="#2e3436"/><path d="M1120 47h10l-5 5z" fill="#2e3436"/><path d="M1893 47h10l-5 5z" fill="#2e3436"/><path d="M1081 59C1078.5 59 1077.8 57.5 1077.8 55.5V42.5C1077.8 40.3 1079 39.2 1081 39.2H1086.8L1089 41.5H1097.5C1099.5 41.5 1100.7 42.8 1100.7 44.8V55.5C1100.7 57.5 1099.8 59 1098.2 59" fill="none" stroke="#2e3436" stroke-width="1.4"/><rect x="1084" y="45.4" width="13.3" height="14.6" fill="#f6f5f4" stroke="#2e3436" stroke-width="1.5"/><path d="M1086.5 48.8H1094.5M1086.5 51.8H1094.5M1086.5 54.6H1090" stroke="#2e3436" stroke-width="1.2"/><path d="M1159.9 37.6H1164.6V45.4H1167.4L1162.25 55.3L1157.1 45.4H1159.9Z" fill="none" stroke="#8e9192" stroke-width="1.25"/><path d="M1153 58.8H1171" stroke="#8e9192" stroke-width="1.4"/><path d="M1194 44L1204 54M1204 44L1194 54" stroke="#2e3436" stroke-width="2"/><rect x="1224" y="32" width="1" height="34" fill="#dcdad6"/><rect x="1312" y="32" width="1" height="34" fill="#dcdad6"/><rect x="1474" y="32" width="1" height="34" fill="#dcdad6"/><rect x="1562" y="32" width="1" height="34" fill="#dcdad6"/><rect x="1724" y="32" width="1" height="34" fill="#dcdad6"/><rect x="1812" y="32" width="1" height="34" fill="#dcdad6"/><rect x="1240.5" y="37.5" width="19" height="23" rx="2" fill="#f3f3f3" stroke="#9a9a9a" stroke-width="1"/><path d="M1243 43H1257M1243 47H1257M1243 51H1257M1243 55H1257" stroke="#dcdcdc" stroke-width="1"/><path d="M1246 55L1256 44" stroke="#3b6fe0" stroke-width="3.2"/><path d="M1244 58L1246 55" stroke="#e0b080" stroke-width="1.5"/><rect x="1277.6" y="42.6" width="19" height="13.2" rx="2.5" fill="#d2d2d2" stroke="#8e9192" stroke-width="1.3"/><rect x="1281.6" y="40.2" width="11" height="5.5" rx="0.8" fill="#fff" stroke="#8e9192" stroke-width="1.3"/><rect x="1279.5" y="45.5" width="15" height="1" fill="#c4c4c4"/><rect x="1280" y="49.8" width="14" height="1.5" fill="#555"/><rect x="1281.6" y="50.6" width="11" height="6.9" rx="0.8" fill="#fff" stroke="#8e9192" stroke-width="1.3"/><path d="M1283.5 53.5H1290.5M1283.5 55.5H1290.5" stroke="#a0a0a0" stroke-width="0.8"/><circle cx="1289.5" cy="48.3" r="0.7" fill="#e03050"/><circle cx="1291.5" cy="48.3" r="0.7" fill="#f07030"/><circle cx="1293.5" cy="48.3" r="0.7" fill="#40b040"/><circle cx="1332.5" cy="57" r="3" fill="none" stroke="#8e9192" stroke-width="1.6"/><circle cx="1342.5" cy="57" r="3" fill="none" stroke="#8e9192" stroke-width="1.6"/><path d="M1334 54L1339.5 38M1341 54L1335.5 38" stroke="#8e9192" stroke-width="1.6"/><path d="M1366 56V40H1380" fill="none" stroke="#8e9192" stroke-width="1.5"/><rect x="1369" y="42" width="14" height="17" fill="#f6f5f4" stroke="#8e9192" stroke-width="1.6"/><path d="M1372 46H1380M1372 49H1380M1372 52H1376" stroke="#8e9192" stroke-width="1.4"/><path d="M1405 58H1404C1402 58 1402 57 1402 55V44C1402 42 1403 41 1405 41H1415C1417 41 1418 42 1418 44V46" fill="none" stroke="#8e9192" stroke-width="1.6"/><rect x="1406" y="39" width="8" height="4" fill="#8e9192"/><circle cx="1410" cy="38.5" r="1.8" fill="none" stroke="#8e9192" stroke-width="1.3"/><rect x="1406" y="45" width="14" height="15" fill="#f6f5f4" stroke="#8e9192" stroke-width="1.6"/><path d="M1409 49H1417M1409 52H1417M1409 55H1413" stroke="#8e9192" stroke-width="1.4"/><path d="M1439 43H1458M1445 43V39H1452V43" fill="none" stroke="#8e9192" stroke-width="1.8"/><path d="M1441 45V58C1441 59 1442 60 1443 60H1454C1455 60 1456 59 1456 58V45" fill="none" stroke="#8e9192" stroke-width="1.6"/><path d="M1445.5 47V55M1448.5 47V55M1451.5 47V55" stroke="#8e9192" stroke-width="1.2"/><path d="M1491 51C1494 43 1506 42 1510 53" fill="none" stroke="#2e3436" stroke-width="2"/><path d="M1488 54L1489 46L1496 51Z" fill="#2e3436"/><path d="M1527 45C1530 55 1542 57 1547 48" fill="none" stroke="#8e9192" stroke-width="1.6"/><path d="M1549 44L1548 51L1542 48Z" fill="#8e9192"/><circle cx="1588" cy="49" r="11.3" fill="none" stroke="#8e9192" stroke-width="1.4"/><path d="M1583 44L1593 54M1593 44L1583 54" stroke="#8e9192" stroke-width="1.4"/><path d="M1617 43L1624.5 38.5L1632 43V51L1624.5 55L1617 51Z" fill="#8e9192"/><path d="M1617 43L1624.5 47L1632 43" fill="none" stroke="#d0d0d0" stroke-width="1"/><path d="M1621 56h7l-3.5 5z" fill="#8e9192"/><path d="M1654 41V58L1670 49.5Z" fill="#8e9192"/><rect x="1691" y="41" width="16" height="16" fill="#2e3436"/><path d="M1743 43C1749 38 1760 40 1760 50C1760 57 1753 61 1746 58" fill="none" stroke="#8e9192" stroke-width="1.5"/><path d="M1744 58L1740 53" stroke="#8e9192" stroke-width="1.5" stroke-dasharray="1.5 2"/><path d="M1739 40L1747 41L1741 47Z" fill="#8e9192"/><circle cx="1750" cy="49" r="2.2" fill="none" stroke="#8e9192" stroke-width="1.4"/><path d="M1794 43C1788 38 1777 40 1777 50C1777 57 1784 61 1791 58" fill="none" stroke="#8e9192" stroke-width="1.5"/><path d="M1793 58L1797 53" stroke="#8e9192" stroke-width="1.5" stroke-dasharray="1.5 2"/><path d="M1798 40L1790 41L1796 47Z" fill="#8e9192"/><circle cx="1787" cy="49" r="2.2" fill="none" stroke="#8e9192" stroke-width="1.4"/><rect x="1832" y="38" width="7" height="5" rx="1" fill="#8e9192"/><rect x="1825" y="51" width="7" height="6" rx="1" fill="#8e9192"/><rect x="1842" y="51" width="7" height="6" rx="1" fill="#8e9192"/><path d="M1835.5 43V47M1828.5 51V47H1845.5V51" fill="none" stroke="#8e9192" stroke-width="1.4"/></svg>
<div class="abs" style="left:994px;top:70px;width:798px;height:36px;background:#e1dedb"></div>
<div class="abs" style="left:994px;top:106px;width:798px;height:1px;background:#cdc7c2"></div>
<div class="abs" style="left:1106px;top:70px;width:121px;height:36px;background:#ebe9e6"></div>
<div class="abs" style="left:1106px;top:104px;width:121px;height:3px;background:#3584e4"></div>
<div class="tab" style="left:1015px">rds_tx</div>
<div class="tab" style="left:1118px">keyfob_rx</div>
<svg class="abs" style="left:0;top:0" width="1921" height="110"><path d="M1073.5 84.5L1081.5 92.5M1081.5 84.5L1073.5 92.5M1204 84.5L1212 92.5M1212 84.5L1204 92.5" stroke="#a0a0a0" stroke-width="1.1"/></svg>
<div class="abs" style="left:994px;top:107px;width:798px;height:710px;background:#fff"></div>
<svg class="abs" style="left:0;top:0" width="1921" height="1180"><rect x="1003" y="114" width="93" height="37" fill="#f0ecfc" stroke="#5e5e5e" stroke-width="2.2"/><text x="1049.5" y="124.5" text-anchor="middle" class="bt">Options</text><text x="1007" y="134.5" class="bk">Output Language: <tspan class="bv">Python</tspan></text><text x="1007" y="144.0" class="bk">Generate Options: <tspan class="bv">QT GUI</tspan></text><rect x="1105" y="114" width="37" height="28" fill="#f0ecfc" stroke="#5e5e5e" stroke-width="2.2"/><text x="1123.5" y="125" text-anchor="middle" class="bt">Variable</text><text x="1109" y="135.0" class="bk">Value: <tspan class="bv">5</tspan></text><rect x="1151" y="114" width="42" height="28" fill="#f0ecfc" stroke="#5e5e5e" stroke-width="2.2"/><text x="1172.0" y="125" text-anchor="middle" class="bt">Variable</text><text x="1155" y="135.0" class="bk">Value: <tspan class="bv">48k</tspan></text><rect x="1008" y="165" width="125" height="124" fill="#f0ecfc" stroke="#5e5e5e" stroke-width="2.2"/><text x="1070.5" y="176" text-anchor="middle" class="bt">osmocom Source</text><text x="1012" y="186.0" class="bk">Sync: <tspan class="bv">Unknown PPS</tspan></text><text x="1012" y="195.8" class="bk">Number Channels: <tspan class="bv">1</tspan></text><text x="1012" y="205.5" class="bk">Sample Rate (sps): <tspan class="bv">1M</tspan></text><text x="1012" y="215.2" class="bk">Ch0: Frequency (Hz): <tspan class="bv">434.4M</tspan></text><text x="1012" y="225.0" class="bk">Ch0: Frequency Correction (ppm): <tspan class="bv">0</tspan></text><text x="1012" y="234.8" class="bk">Ch0: DC Offset Mode: <tspan class="bv">0</tspan></text><text x="1012" y="244.5" class="bk">Ch0: IQ Balance Mode: <tspan class="bv">0</tspan></text><text x="1012" y="254.2" class="bk">Ch0: Gain Mode: <tspan class="bv">false</tspan></text><text x="1012" y="264.0" class="bk">Ch0: RF Gain (dB): <tspan class="bv">2</tspan></text><text x="1012" y="273.8" class="bk">Ch0: IF Gain (dB): <tspan class="bv">0</tspan></text><text x="1012" y="283.5" class="bk">Ch0: BB Gain (dB): <tspan class="bv">0</tspan></text><rect x="1170" y="213" width="60" height="19" fill="#f0ecfc" stroke="#5e5e5e" stroke-width="2.2"/><text x="1200.0" y="225.0" text-anchor="middle" class="bt">Complex to Mag</text><rect x="1267" y="235" width="74" height="55" fill="#f0ecfc" stroke="#5e5e5e" stroke-width="2.2"/><text x="1304.0" y="246" text-anchor="middle" class="bt">Moving Average</text><text x="1271" y="256.0" class="bk">Length: <tspan class="bv">10k</tspan></text><text x="1271" y="265.9" class="bk">Scale: <tspan class="bv">100u</tspan></text><text x="1271" y="275.8" class="bk">Max Iter: <tspan class="bv">4k</tspan></text><text x="1271" y="285.7" class="bk">Length of Vectors: <tspan class="bv">1</tspan></text><rect x="1392" y="200" width="37" height="36" fill="#f0ecfc" stroke="#5e5e5e" stroke-width="2.2"/><text x="1410.5" y="220.5" text-anchor="middle" class="bt">Subtract</text><rect x="1467" y="223" width="26" height="36" fill="#f0ecfc" stroke="#5e5e5e" stroke-width="2.2"/><text x="1480.0" y="243.5" text-anchor="middle" class="bt">Divide</text><rect x="1555" y="219" width="114" height="54" fill="#f0ecfc" stroke="#5e5e5e" stroke-width="2.2"/><text x="1612.0" y="228" text-anchor="middle" class="bt">Polyphase Arbitrary Resampler</text><text x="1559" y="238.0" class="bk">Resampling Rate: <tspan class="bv">16.9687m</tspan></text><text x="1559" y="247.9" class="bk">Taps: <tspan class="bv"></tspan></text><text x="1559" y="257.8" class="bk">Number of Filters: <tspan class="bv">32</tspan></text><text x="1559" y="267.7" class="bk">Stop-band Attenuation: <tspan class="bv">100</tspan></text><rect x="1027" y="302" width="49" height="17" fill="#f0ecfc" stroke="#5e5e5e" stroke-width="2.2"/><text x="1051.5" y="313.0" text-anchor="middle" class="bt">parse_packet</text><rect x="1124" y="290" width="101" height="45" fill="#f0ecfc" stroke="#5e5e5e" stroke-width="2.2"/><text x="1174.5" y="300" text-anchor="middle" class="bt">Correlate Access Code - Tag</text><text x="1128" y="310.0" class="bk">Access Code: <tspan class="bv">10101000</tspan></text><text x="1128" y="320.0" class="bk">Threshold: <tspan class="bv">0</tspan></text><text x="1128" y="330.0" class="bk">Tag Name: <tspan class="bv">packet_start</tspan></text><rect x="1263" y="302" width="73" height="17" fill="#f0ecfc" stroke="#5e5e5e" stroke-width="2.2"/><text x="1299.5" y="313.0" text-anchor="middle" class="bt">manchester_decode</text><rect x="1374" y="302" width="50" height="17" fill="#f0ecfc" stroke="#5e5e5e" stroke-width="2.2"/><text x="1399.0" y="313.0" text-anchor="middle" class="bt">Binary Slicer</text><rect x="1476" y="284" width="96" height="63" fill="#f0ecfc" stroke="#5e5e5e" stroke-width="2.2"/><text x="1524.0" y="293" text-anchor="middle" class="bt">Clock Recovery MM</text><text x="1480" y="303.0" class="bk">Omega: <tspan class="bv">5</tspan></text><text x="1480" y="312.9" class="bk">Gain Omega: <tspan class="bv">7.65625m</tspan></text><text x="1480" y="322.8" class="bk">Mu: <tspan class="bv">500m</tspan></text><text x="1480" y="332.7" class="bk">Gain Mu: <tspan class="bv">175m</tspan></text><text x="1480" y="342.6" class="bk">Omega Relative Limit: <tspan class="bv">50m</tspan></text><rect x="1629" y="291" width="72" height="53" fill="#f0ecfc" stroke="#5e5e5e" stroke-width="2.2"/><text x="1665.0" y="300" text-anchor="middle" class="bt">Moving Average</text><text x="1633" y="310.0" class="bk">Length: <tspan class="bv">5</tspan></text><text x="1633" y="319.9" class="bk">Scale: <tspan class="bv">200m</tspan></text><text x="1633" y="329.8" class="bk">Max Iter: <tspan class="bv">4k</tspan></text><text x="1633" y="339.7" class="bk">Length of Vectors: <tspan class="bv">1</tspan></text><rect x="1476" y="355" width="87" height="45" fill="#f0ecfc" stroke="#5e5e5e" stroke-width="2.2"/><text x="1519.5" y="365" text-anchor="middle" class="bt">QT GUI Time Sink</text><text x="1480" y="375.0" class="bk">Number of Points: <tspan class="bv">1.024k</tspan></text><text x="1480" y="385.0" class="bk">Sample Rate: <tspan class="bv">3.4k</tspan></text><text x="1480" y="395.0" class="bk">Autoscale: <tspan class="bv">No</tspan></text><rect x="1615" y="355" width="87" height="45" fill="#f0ecfc" stroke="#5e5e5e" stroke-width="2.2"/><text x="1658.5" y="365" text-anchor="middle" class="bt">QT GUI Time Sink</text><text x="1619" y="375.0" class="bk">Number of Points: <tspan class="bv">1.024k</tspan></text><text x="1619" y="385.0" class="bk">Sample Rate: <tspan class="bv">17k</tspan></text><text x="1619" y="395.0" class="bk">Autoscale: <tspan class="bv">No</tspan></text><rect x="1001.5" y="222.5" width="5" height="10" fill="#c8c8c8" stroke="#9a9a9a" stroke-width="1"/><rect x="1134.5" y="221.5" width="5" height="11" fill="#2a8cf0" stroke="#1f6cc4" stroke-width="1"/><rect x="1163.5" y="216.5" width="5" height="12" fill="#2a8cf0" stroke="#1f6cc4" stroke-width="1"/><rect x="1231.5" y="216.5" width="5" height="12" fill="#f57c00" stroke="#c85f00" stroke-width="1"/><rect x="1261.5" y="257.5" width="4" height="10" fill="#f57c00" stroke="#c85f00" stroke-width="1"/><rect x="1342.5" y="256.5" width="5" height="11" fill="#f57c00" stroke="#c85f00" stroke-width="1"/><rect x="1385.5" y="203.5" width="5" height="10" fill="#f57c00" stroke="#c85f00" stroke-width="1"/><rect x="1385.5" y="221.5" width="5" height="11" fill="#f57c00" stroke="#c85f00" stroke-width="1"/><rect x="1430.5" y="212.5" width="5" height="11" fill="#f57c00" stroke="#c85f00" stroke-width="1"/><rect x="1460.5" y="226.5" width="5" height="10" fill="#f57c00" stroke="#c85f00" stroke-width="1"/><rect x="1460.5" y="244.5" width="5" height="11" fill="#f57c00" stroke="#c85f00" stroke-width="1"/><rect x="1494.5" y="235.5" width="5" height="10" fill="#f57c00" stroke="#c85f00" stroke-width="1"/><rect x="1548.5" y="240.5" width="5" height="10" fill="#f57c00" stroke="#c85f00" stroke-width="1"/><rect x="1670.5" y="240.5" width="5" height="10" fill="#f57c00" stroke="#c85f00" stroke-width="1"/><rect x="1078.5" y="305.5" width="5" height="11" fill="#d500f9" stroke="#a000c0" stroke-width="1"/><rect x="1117.5" y="307.5" width="5" height="10" fill="#d500f9" stroke="#a000c0" stroke-width="1"/><rect x="1226.5" y="307.5" width="5" height="10" fill="#d500f9" stroke="#a000c0" stroke-width="1"/><rect x="1256.5" y="305.5" width="5" height="11" fill="#d500f9" stroke="#a000c0" stroke-width="1"/><rect x="1337.5" y="305.5" width="5" height="11" fill="#d500f9" stroke="#a000c0" stroke-width="1"/><rect x="1367.5" y="305.5" width="5" height="11" fill="#d500f9" stroke="#a000c0" stroke-width="1"/><rect x="1425.5" y="305.5" width="5" height="11" fill="#f57c00" stroke="#c85f00" stroke-width="1"/><rect x="1469.5" y="310.5" width="5" height="10" fill="#f57c00" stroke="#c85f00" stroke-width="1"/><rect x="1573.5" y="309.5" width="5" height="10" fill="#f57c00" stroke="#c85f00" stroke-width="1"/><rect x="1622.5" y="312.5" width="5" height="10" fill="#f57c00" stroke="#c85f00" stroke-width="1"/><rect x="1702.5" y="312.5" width="5" height="10" fill="#f57c00" stroke="#c85f00" stroke-width="1"/><rect x="1469.5" y="372.5" width="5" height="10" fill="#f57c00" stroke="#c85f00" stroke-width="1"/><rect x="1608.5" y="372.5" width="5" height="10" fill="#f57c00" stroke="#c85f00" stroke-width="1"/><path d="M1140 227 H1146 C1152 227 1153 224.5 1149 224 C1146 223.5 1150 222 1156 222" fill="none" stroke="#000" stroke-width="2"/><path d="M1163 222L1156 218.5L1156 225.5Z" fill="#000"/><path d="M1237 222 C1290 222 1330 210 1378 208" fill="none" stroke="#000" stroke-width="2"/><path d="M1385 208L1378 204.5L1378 211.5Z" fill="#000"/><path d="M1237 222 C1262 222 1244 262 1254 262" fill="none" stroke="#000" stroke-width="2"/><path d="M1261 262L1254 258.5L1254 265.5Z" fill="#000"/><path d="M1348 262 C1375 262 1360 227 1378 227" fill="none" stroke="#000" stroke-width="2"/><path d="M1385 227L1378 223.5L1378 230.5Z" fill="#000"/><path d="M1348 262 C1390 262 1420 250 1453 250" fill="none" stroke="#000" stroke-width="2"/><path d="M1460 250L1453 246.5L1453 253.5Z" fill="#000"/><path d="M1436 218 C1462 218 1430 231 1453 231" fill="none" stroke="#000" stroke-width="2"/><path d="M1460 231L1453 227.5L1453 234.5Z" fill="#000"/><path d="M1500 240 C1525 240 1520 245 1541 245" fill="none" stroke="#000" stroke-width="2"/><path d="M1548 245L1541 241.5L1541 248.5Z" fill="#000"/><path d="M1676 245 C1710 245 1730 317 1715 317" fill="none" stroke="#000" stroke-width="2"/><path d="M1708 317L1715 313.5L1715 320.5Z" fill="#000"/><path d="M1622 317 C1600 317 1600 314 1586 314" fill="none" stroke="#000" stroke-width="2"/><path d="M1579 314L1586 310.5L1586 317.5Z" fill="#000"/><path d="M1622 317 C1590 317 1592 377 1601 377" fill="none" stroke="#000" stroke-width="2"/><path d="M1608 377L1601 373.5L1601 380.5Z" fill="#000"/><path d="M1469 315 C1455 315 1450 311 1438 311" fill="none" stroke="#000" stroke-width="2"/><path d="M1431 311L1438 307.5L1438 314.5Z" fill="#000"/><path d="M1469 315 C1440 315 1440 377 1462 377" fill="none" stroke="#000" stroke-width="2"/><path d="M1469 377L1462 373.5L1462 380.5Z" fill="#000"/><path d="M1367 311 C1360 311 1358 311 1350 311" fill="none" stroke="#000" stroke-width="2"/><path d="M1343 311L1350 307.5L1350 314.5Z" fill="#000"/><path d="M1256 311 C1248 311 1246 312 1239 312" fill="none" stroke="#000" stroke-width="2"/><path d="M1232 312L1239 308.5L1239 315.5Z" fill="#000"/><path d="M1117 312 C1100 312 1105 311 1091 311" fill="none" stroke="#000" stroke-width="2"/><path d="M1084 311L1091 307.5L1091 314.5Z" fill="#000"/></svg>
<div class="abs" style="left:994px;top:817px;width:798px;height:1px;background:#cdc7c2"></div>
<div class="abs" style="left:994px;top:818px;width:797px;height:361px;background:#fff;overflow:hidden"><span class="cl" style="top:-6px;left:0px">0000016e07</span><span class="cl" style="top:-6px;left:88.0px">1111000110000000000110001</span><span class="cl" style="top:-6px;left:296.0px">01000110</span><span class="cl cu" style="top:-6px;left:368.0px">SHORT TRUNK</span><span class="cl" style="top:11px;left:0px">0000016e3d</span><span class="cl" style="top:11px;left:88.0px">1111000110000000000110001</span><span class="cl" style="top:11px;left:296.0px">01000110</span><span class="cl cu" style="top:11px;left:368.0px">SHORT TRUNK</span><span class="cl" style="top:28px;left:0px">0000016e75</span><span class="cl" style="top:28px;left:88.0px">1111000110000000000110001</span><span class="cl" style="top:28px;left:296.0px">01000110</span><span class="cl cu" style="top:28px;left:368.0px">SHORT TRUNK</span><span class="cl" style="top:45px;left:0px">0000016ea9</span><span class="cl" style="top:45px;left:88.0px">1111000110000000000110001</span><span class="cl" style="top:45px;left:296.0px">01000110</span><span class="cl cu" style="top:45px;left:368.0px">SHORT TRUNK</span><span class="cl" style="top:62px;left:0px">0000016edc</span><span class="cl" style="top:62px;left:86.9px">1111000110000000000110001</span><span class="cl" style="top:62px;left:294.9px">01000110</span><span class="cl cu" style="top:62px;left:366.9px">SHORT TRUNK</span><span class="cl" style="top:79px;left:0px">0000016f12</span><span class="cl" style="top:79px;left:84.4px">1111000110000000000110001</span><span class="cl" style="top:79px;left:292.4px">01000110</span><span class="cl cu" style="top:79px;left:364.4px">SHORT TRUNK</span><span class="cl" style="top:96px;left:0px">0000016f4a</span><span class="cl" style="top:96px;left:84.4px">1111000110000000000110001</span><span class="cl" style="top:96px;left:292.4px">01000110</span><span class="cl cu" style="top:96px;left:364.4px">SHORT TRUNK</span><span class="cl" style="top:113px;left:0px">0000016f83</span><span class="cl" style="top:113px;left:84.4px">1111000110000000000110001</span><span class="cl" style="top:113px;left:292.4px">01000110</span><span class="cl cu" style="top:113px;left:364.4px">SHORT TRUNK</span><span class="cl" style="top:130px;left:0px">0000016fbb</span><span class="cl" style="top:130px;left:84.4px">1111000110000000000110001</span><span class="cl" style="top:130px;left:292.4px">01000110</span><span class="cl cu" style="top:130px;left:364.4px">SHORT TRUNK</span><span class="cl" style="top:147px;left:0px">0000016ff4</span><span class="cl" style="top:147px;left:80.8px">1111000110000000000110001</span><span class="cl" style="top:147px;left:288.8px">01000110</span><span class="cl cu" style="top:147px;left:360.8px">SHORT TRUNK</span><span class="cl" style="top:164px;left:0px">000001702c</span><span class="cl" style="top:164px;left:86.9px">1111000110000000000110001</span><span class="cl" style="top:164px;left:294.9px">01000110</span><span class="cl cu" style="top:164px;left:366.9px">SHORT TRUNK</span><span class="cl" style="top:181px;left:0px">0000017063</span><span class="cl" style="top:181px;left:88.0px">1111000110000000000110001</span><span class="cl" style="top:181px;left:296.0px">01000110</span><span class="cl cu" style="top:181px;left:368.0px">SHORT TRUNK</span><span class="cl" style="top:198px;left:0px">0000017093</span><span class="cl" style="top:198px;left:88.0px">1111000110000000000110001</span><span class="cl" style="top:198px;left:296.0px">01000110</span><span class="cl cu" style="top:198px;left:368.0px">SHORT TRUNK</span><span class="cl" style="top:215px;left:0px">00000170c7</span><span class="cl" style="top:215px;left:86.9px">1111000110000000000110001</span><span class="cl" style="top:215px;left:294.9px">01000110</span><span class="cl cu" style="top:215px;left:366.9px">SHORT TRUNK</span><span class="cl" style="top:232px;left:0px">00000170f9</span><span class="cl" style="top:232px;left:84.4px">1111000110000000000110001</span><span class="cl" style="top:232px;left:292.4px">01000110</span><span class="cl cu" style="top:232px;left:364.4px">SHORT TRUNK</span><span class="cl" style="top:249px;left:0px">0000017131</span><span class="cl" style="top:249px;left:88.0px">1111000110000000000110001</span><span class="cl" style="top:249px;left:296.0px">01000110</span><span class="cl cu" style="top:249px;left:368.0px">SHORT TRUNK</span><span class="cl" style="top:266px;left:0px">000001716a</span><span class="cl" style="top:266px;left:88.0px">1111000110000000000110001</span><span class="cl" style="top:266px;left:296.0px">01000110</span><span class="cl cu" style="top:266px;left:368.0px">SHORT TRUNK</span><span class="cl" style="top:283px;left:0px">00000171a2</span><span class="cl" style="top:283px;left:88.0px">1111000110000000000110001</span><span class="cl" style="top:283px;left:296.0px">01000110</span><span class="cl cu" style="top:283px;left:368.0px">SHORT TRUNK</span><span class="cl" style="top:300px;left:0px">00000171d7</span><span class="cl" style="top:300px;left:88.0px">1111000110000000000110001</span><span class="cl" style="top:300px;left:296.0px">01000110</span><span class="cl cu" style="top:300px;left:368.0px">SHORT TRUNK</span><span class="cl" style="top:317px;left:0px">0000017211</span><span class="cl" style="top:317px;left:88.0px">1111000110000000000110001</span><span class="cl" style="top:317px;left:296.0px">01000110</span><span class="cl cu" style="top:317px;left:368.0px">SHORT TRUNK</span><span class="cl" style="top:334px;left:0px">0000017249</span><span class="cl" style="top:334px;left:88.0px">1111000110000000000110001</span><span class="cl" style="top:334px;left:296.0px">01000110</span><span class="cl cu" style="top:334px;left:368.0px">SHORT TRUNK</span><span class="cl" style="top:351px;left:0px">000001727c</span><span class="cl" style="top:351px;left:86.9px">1111000110000000000110001</span><span class="cl" style="top:351px;left:294.9px">01000110</span><span class="cl cu" style="top:351px;left:366.9px">SHORT TRUNK</span></div>
<div class="abs" style="left:1787px;top:1141px;width:3px;height:38px;background:#8d9091;border-radius:1px"></div>
<div class="abs" style="left:994px;top:1179px;width:797px;height:1px;background:#111"></div>
<div class="abs" style="left:1792px;top:70px;width:1px;height:747px;background:#cdc7c2"></div>
<div class="abs" style="left:1791px;top:817px;width:2px;height:363px;background:#cdc7c2"></div>
<div class="abs" style="left:1793px;top:70px;width:126px;height:1110px;background:#fff"></div>
<svg class="abs" style="left:0;top:0" width="1921" height="1180"><clipPath id="tcp"><rect x="1793" y="70" width="126" height="1110"/></clipPath><g clip-path="url(#tcp)"><path d="M1798 79h9l-4.5 5z" fill="#2e3436"/><text x="1815" y="86" class="tr">Core</text><path d="M1819 99v10l5 -5z" fill="#444"/><text x="1833" y="109" class="tr">Audio</text><path d="M1819 122v10l5 -5z" fill="#444"/><text x="1833" y="132" class="tr">Boolean Operators</text><path d="M1819 145v10l5 -5z" fill="#444"/><text x="1833" y="155" class="tr">Byte Operators</text><path d="M1819 168v10l5 -5z" fill="#444"/><text x="1833" y="178" class="tr">Channelizers</text><path d="M1819 191v10l5 -5z" fill="#444"/><text x="1833" y="201" class="tr">Channel Models</text><path d="M1819 214v10l5 -5z" fill="#444"/><text x="1833" y="224" class="tr">Coding</text><path d="M1819 237v10l5 -5z" fill="#444"/><text x="1833" y="247" class="tr">Control Port</text><path d="M1819 260v10l5 -5z" fill="#444"/><text x="1833" y="270" class="tr">Debug Tools</text><path d="M1819 283v10l5 -5z" fill="#444"/><text x="1833" y="293" class="tr">Deprecated</text><path d="M1819 306v10l5 -5z" fill="#444"/><text x="1833" y="316" class="tr">Digital Television</text><path d="M1819 329v10l5 -5z" fill="#444"/><text x="1833" y="339" class="tr">Equalizers</text><path d="M1819 352v10l5 -5z" fill="#444"/><text x="1833" y="362" class="tr">Error Coding</text><path d="M1819 375v10l5 -5z" fill="#444"/><text x="1833" y="385" class="tr">File Operators</text><path d="M1819 398v10l5 -5z" fill="#444"/><text x="1833" y="408" class="tr">Filters</text><path d="M1819 421v10l5 -5z" fill="#444"/><text x="1833" y="431" class="tr">Fourier Analysis</text><path d="M1819 444v10l5 -5z" fill="#444"/><text x="1833" y="454" class="tr">GUI Widgets</text><path d="M1819 467v10l5 -5z" fill="#444"/><text x="1833" y="477" class="tr">Impairment Models</text><path d="M1819 490v10l5 -5z" fill="#444"/><text x="1833" y="500" class="tr">Instrumentation</text><path d="M1819 513v10l5 -5z" fill="#444"/><text x="1833" y="523" class="tr">Level Controllers</text><path d="M1819 536v10l5 -5z" fill="#444"/><text x="1833" y="546" class="tr">Math Operators</text><path d="M1819 559v10l5 -5z" fill="#444"/><text x="1833" y="569" class="tr">Measurement Tools</text><path d="M1819 582v10l5 -5z" fill="#444"/><text x="1833" y="592" class="tr">Message Tools</text><path d="M1819 605v10l5 -5z" fill="#444"/><text x="1833" y="615" class="tr">Misc</text><path d="M1819 628v10l5 -5z" fill="#444"/><text x="1833" y="638" class="tr">Modulators</text><path d="M1819 651v10l5 -5z" fill="#444"/><text x="1833" y="661" class="tr">Networking Tools</text><path d="M1819 674v10l5 -5z" fill="#444"/><text x="1833" y="684" class="tr">OFDM</text><path d="M1819 697v10l5 -5z" fill="#444"/><text x="1833" y="707" class="tr">Packet Operators</text><path d="M1819 720v10l5 -5z" fill="#444"/><text x="1833" y="730" class="tr">Peak Detectors</text><path d="M1819 743v10l5 -5z" fill="#444"/><text x="1833" y="753" class="tr">Resamplers</text><path d="M1819 766v10l5 -5z" fill="#444"/><text x="1833" y="776" class="tr">Stream Operators</text><path d="M1819 789v10l5 -5z" fill="#444"/><text x="1833" y="799" class="tr">Stream Tag Tools</text><path d="M1819 812v10l5 -5z" fill="#444"/><text x="1833" y="822" class="tr">Symbol Coding</text><path d="M1819 835v10l5 -5z" fill="#444"/><text x="1833" y="845" class="tr">Synchronizers</text><path d="M1819 858v10l5 -5z" fill="#444"/><text x="1833" y="868" class="tr">Trellis Coding</text><path d="M1819 881v10l5 -5z" fill="#444"/><text x="1833" y="891" class="tr">Type Converters</text><path d="M1819 904v10l5 -5z" fill="#444"/><text x="1833" y="914" class="tr">UHD</text><path d="M1819 927v10l5 -5z" fill="#444"/><text x="1833" y="937" class="tr">Variables</text><path d="M1819 950v10l5 -5z" fill="#444"/><text x="1833" y="960" class="tr">Waveform Generators</text><path d="M1819 973v10l5 -5z" fill="#444"/><text x="1833" y="983" class="tr">ZeroMQ Interfaces</text><path d="M1801 996v10l5 -5z" fill="#444"/><text x="1815" y="1006" class="tr">FM Radio</text><path d="M1801 1019v10l5 -5z" fill="#444"/><text x="1815" y="1029" class="tr">Foo</text><path d="M1801 1042v10l5 -5z" fill="#444"/><text x="1815" y="1052" class="tr">IEEE802.11</text><path d="M1801 1065v10l5 -5z" fill="#444"/><text x="1815" y="1075" class="tr">IEEE802.15.4</text><path d="M1801 1088v10l5 -5z" fill="#444"/><text x="1815" y="1098" class="tr">Keyfob</text><path d="M1801 1111v10l5 -5z" fill="#444"/><text x="1815" y="1121" class="tr">OsmoSDR</text><path d="M1801 1134v10l5 -5z" fill="#444"/><text x="1815" y="1144" class="tr">RDS</text><path d="M1801 1157v10l5 -5z" fill="#444"/><text x="1815" y="1167" class="tr">RSTT</text></g></svg>
<div class="abs" style="left:1919px;top:3px;width:1px;height:1177px;background:#1a1a1a"></div>
<div class="abs" style="left:1920px;top:3px;width:1px;height:1177px;background:#8fb8e8"></div>
</body></html>
